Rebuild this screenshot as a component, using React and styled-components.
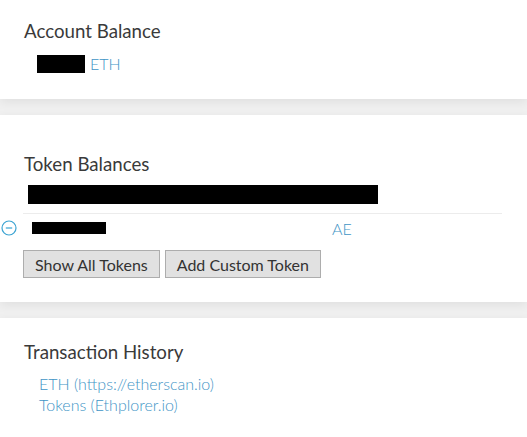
import React from 'react'
import styled, { createGlobalStyle } from 'styled-components'

const GlobalStyle = createGlobalStyle`
    html, body {
        margin: 0;
        padding: 0;
        background: #f0f0f0;
        font-family: Lato, "Open Sans", sans-serif;
        color: #333;
    }
`

const Page = styled.div`
    display: flex;
    flex-direction: column;
    gap: 16px;
    min-height: 437px;
`

const Card = styled.section`
    background: #fff;
    box-shadow: 0 3px 10px rgba(0, 0, 0, 0.07);
    padding: ${p => p.$top}px 25px ${p => p.$bottom}px 23px;
`

const Title = styled.h4`
    margin: 0;
    font-size: 18.7px;
    font-weight: 400;
    line-height: 22px;
    color: #3a3a3a;
    padding-left: 1px;
`

const BalanceRow = styled.div`
    display: flex;
    align-items: center;
    height: 18px;
    margin-top: 13px;
    padding-left: 14px;
`

const Redacted = styled.span`
    display: inline-block;
    background: #000;
    width: ${p => p.$w}px;
    height: ${p => p.$h}px;
`

const Unit = styled.span`
    margin-left: 5px;
    font-size: 16px;
    font-weight: 300;
    line-height: 18px;
    color: #3f95c6;
`

const AddressBar = styled(Redacted)`
    display: block;
    margin: 10px 0 0 5px;
`

const Divider = styled.div`
    margin-top: 9px;
    height: 1px;
    background: #ececec;
`

const TokenRow = styled.div`
    display: flex;
    align-items: center;
    height: 28px;
    margin-left: -22px;
`

const RemoveIcon = styled.svg`
    width: 16px;
    height: 16px;
    flex: none;
`

const NameCell = styled.div`
    width: 300px;
    margin-left: 15px;
    display: flex;
    align-items: center;
`

const Symbol = styled.span`
    font-size: 16px;
    font-weight: 300;
    color: #3f95c6;
`

const Buttons = styled.div`
    display: flex;
    gap: 5px;
    margin-top: 8px;
`

const Button = styled.button`
    height: 28px;
    padding: 0 11px;
    font-family: Lato, "Open Sans", sans-serif;
    font-size: 16px;
    color: #333;
    background: #e1e1e1;
    border: 1px solid #adadad;
    border-radius: 0;
    cursor: pointer;
`

const Links = styled.div`
    display: flex;
    flex-direction: column;
    margin-top: 10px;
    padding-left: 16px;
`

const Link = styled.a`
    font-size: 16px;
    font-weight: 300;
    line-height: 21px;
    color: #3f95c6;
    text-decoration: none;
`

export default function App() {
    return (
        <Page>
            <GlobalStyle />
            <Card $top={20} $bottom={26}>
                <Title>{'Account Balance'}</Title>
                <BalanceRow>
                    <Redacted $w={48} $h={18} />
                    <Unit>{'ETH'}</Unit>
                </BalanceRow>
            </Card>
            <Card $top={38} $bottom={24}>
                <Title>{'Token Balances'}</Title>
                <AddressBar $w={350} $h={19} />
                <Divider />
                <TokenRow>
                    <RemoveIcon viewBox="0 0 16 16">
                        <circle cx="8" cy="8" r="7" fill="none" stroke="#3aa3d2" strokeWidth="1.2" />
                        <line x1="4.8" y1="8" x2="11.2" y2="8" stroke="#3aa3d2" strokeWidth="1.2" />
                    </RemoveIcon>
                    <NameCell>
                        <Redacted $w={74} $h={12} />
                    </NameCell>
                    <Symbol>{'AE'}</Symbol>
                </TokenRow>
                <Buttons>
                    <Button>{'Show All Tokens'}</Button>
                    <Button>{'Add Custom Token'}</Button>
                </Buttons>
            </Card>
            <Card $top={23} $bottom={24}>
                <Title>{'Transaction History'}</Title>
                <Links>
                    <Link href="#">{'ETH (https://etherscan.io)'}</Link>
                    <Link href="#">{'Tokens (Ethplorer.io)'}</Link>
                </Links>
            </Card>
        </Page>
    )
}
